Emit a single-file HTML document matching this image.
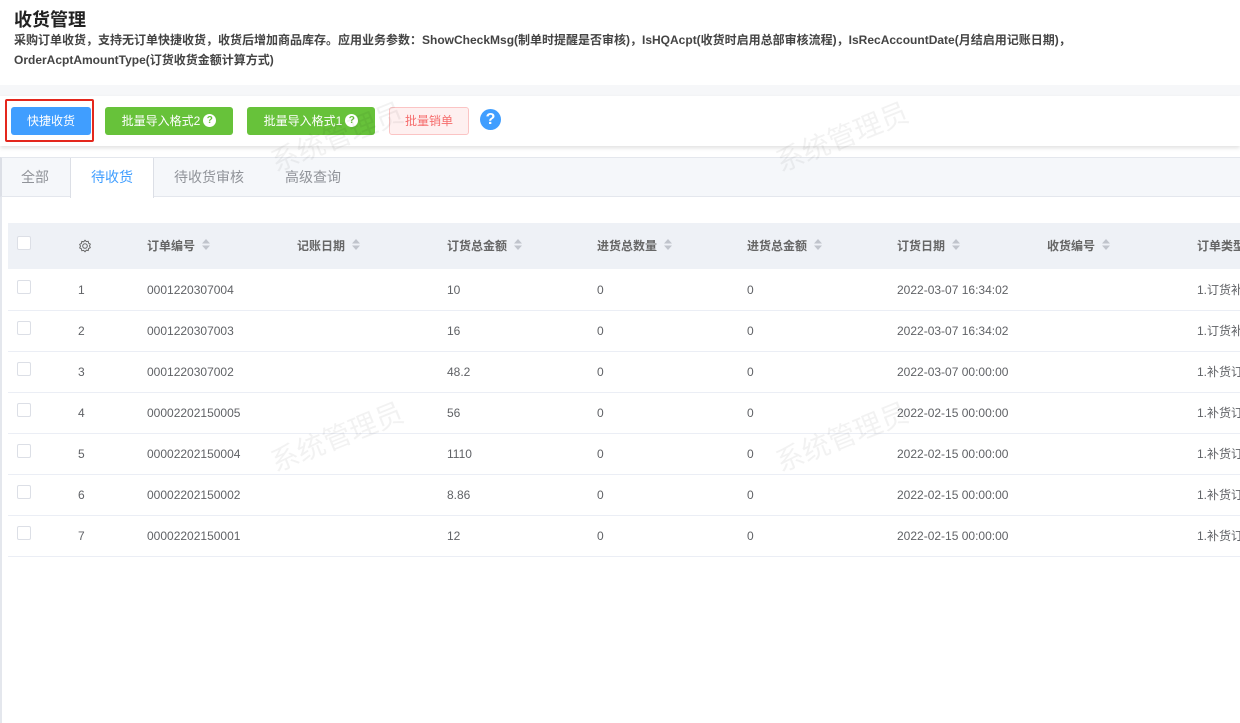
<!DOCTYPE html>
<html><head><meta charset="utf-8"><style>
*{margin:0;padding:0;box-sizing:border-box}
html{width:1240px;height:723px;overflow:hidden}
body{width:1240px;height:723px;overflow:hidden;background:#fff;font-family:"Liberation Sans","Noto Sans CJK SC",sans-serif;position:relative;color:#606266}
.title{position:absolute;left:14px;top:9px;font-size:18px;font-weight:bold;color:#222;line-height:22px}
.desc{position:absolute;left:14px;top:30px;font-size:12px;font-weight:bold;color:#444;line-height:20px;width:1220px}
.band{position:absolute;left:0;top:85px;width:1240px;height:11px;background:#f6f7f9}
.bar{position:absolute;left:0;top:96px;width:1240px;height:50px;background:#fff;box-shadow:0 2px 4px rgba(0,0,0,.12)}
.btn{position:absolute;top:107px;height:28px;border-radius:3px;font-size:12px;color:#fff;text-align:center;line-height:28px;white-space:nowrap}
.q{display:inline-block;width:13px;height:13px;border-radius:50%;background:#fff;color:#67c23a;font-size:10px;line-height:13px;font-weight:bold;vertical-align:middle;margin-left:3px;margin-top:-2px}
.tabs{position:absolute;left:0;top:157px;width:1240px;height:40px;background:#f5f7fa;border-top:1px solid #e4e7ed;border-bottom:1px solid #e4e7ed;border-left:2px solid #dcdfe6}
.tab{position:absolute;top:0;height:39px;line-height:39px;font-size:14px;color:#909399}
.lside{position:absolute;left:0;top:197px;width:2px;height:526px;background:#e4e7ed}
.thead{position:absolute;left:8px;top:223px;width:1232px;height:46px;background:#eef1f6}
.cell{position:absolute;font-size:12px;white-space:nowrap;line-height:16px}
.h{font-weight:bold;color:#666}
.sort{display:inline-block;margin-left:6px;vertical-align:-1px}
.cb{position:absolute;left:17px;width:14px;height:14px;border:1px solid #dcdfe6;border-radius:2px;background:#fff}
.row{position:absolute;left:8px;width:1232px;height:1px;background:#ebeef5}
.wm{position:absolute;font-size:28px;color:rgba(0,0,0,.05);transform:rotate(-22deg);transform-origin:left bottom;white-space:nowrap;line-height:30px}
</style></head><body>
<div class="title">收货管理</div>
<div class="desc">采购订单收货，支持无订单快捷收货，收货后增加商品库存。应用业务参数：ShowCheckMsg(制单时提醒是否审核)，IsHQAcpt(收货时启用总部审核流程)，IsRecAccountDate(月结启用记账日期)，<br>OrderAcptAmountType(订货收货金额计算方式)</div>
<div class="band"></div>
<div class="bar"></div>
<div style="position:absolute;left:5px;top:99px;width:89px;height:43px;border:2px solid #e4271d;border-radius:2px"></div>
<div class="btn" style="left:11px;width:80px;background:#409eff">快捷收货</div>
<div class="btn" style="left:105px;width:128px;background:#67c23a">批量导入格式2<span class="q">?</span></div>
<div class="btn" style="left:247px;width:128px;background:#67c23a">批量导入格式1<span class="q">?</span></div>
<div class="btn" style="left:389px;width:80px;background:#fef0f0;border:1px solid #fbc4c4;color:#f56c6c;line-height:26px">批量销单</div>
<div style="position:absolute;left:480px;top:109px;width:21px;height:21px;border-radius:50%;background:#409eff;color:#fff;font-weight:bold;font-size:16px;text-align:center;line-height:21px">?</div>
<div class="tabs">
<div class="tab" style="left:19px">全部</div>
<div class="tab" style="left:68px;width:84px;background:#fff;border-left:1px solid #dcdfe6;border-right:1px solid #dcdfe6;height:40px;color:#409eff;text-align:center">待收货</div>
<div class="tab" style="left:172px">待收货审核</div>
<div class="tab" style="left:283px">高级查询</div>
</div>
<div class="lside"></div>
<div class="thead"></div>
<div class="cb" style="top:236px"></div>
<svg style="position:absolute;left:78px;top:239px" width="14" height="14" viewBox="0 0 14 14"><circle cx="7" cy="7" r="2.3" fill="none" stroke="#666" stroke-width="1"/><path d="M7 1.2l1.3 1.4 1.9-.3.4 1.9 1.7.9-.8 1.8.8 1.8-1.7.9-.4 1.9-1.9-.3L7 12.8l-1.3-1.4-1.9.3-.4-1.9-1.7-.9.8-1.8-.8-1.8 1.7-.9.4-1.9 1.9.3z" fill="none" stroke="#666" stroke-width="1"/></svg>
<div id="hd"></div>
<div id="rows"></div>
<script>
var s='<svg class="sort" width="10" height="13" viewBox="0 0 10 13"><path d="M5 1L9 5.5H1z M5 12L9 7.5H1z" fill="#c0c4cc"/></svg>';
var hs=[["订单编号",147],["记账日期",297],["订货总金额",447],["进货总数量",597],["进货总金额",747],["订货日期",897],["收货编号",1047]];
var x="";hs.forEach(function(a){x+='<div class="cell h" style="left:'+a[1]+'px;top:238px">'+a[0]+s+'</div>';});
x+='<div class="cell h" style="left:1197px;top:238px">订单类型</div>';
document.getElementById("hd").innerHTML=x;
var d=[["0001220307004","10","2022-03-07 16:34:02","1.订货补"],["0001220307003","16","2022-03-07 16:34:02","1.订货补"],["0001220307002","48.2","2022-03-07 00:00:00","1.补货订"],["00002202150005","56","2022-02-15 00:00:00","1.补货订"],["00002202150004","1110","2022-02-15 00:00:00","1.补货订"],["00002202150002","8.86","2022-02-15 00:00:00","1.补货订"],["00002202150001","12","2022-02-15 00:00:00","1.补货订"]];
var h="";d.forEach(function(r,i){var t=269+i*41,y=t+13;
h+='<div class="cb" style="top:'+(t+11)+'px"></div><div class="cell" style="left:78px;top:'+y+'px">'+(i+1)+'</div><div class="cell" style="left:147px;top:'+y+'px">'+r[0]+'</div><div class="cell" style="left:447px;top:'+y+'px">'+r[1]+'</div><div class="cell" style="left:597px;top:'+y+'px">0</div><div class="cell" style="left:747px;top:'+y+'px">0</div><div class="cell" style="left:897px;top:'+y+'px">'+r[2]+'</div><div class="cell" style="left:1197px;top:'+y+'px">'+r[3]+'</div><div class="row" style="top:'+(t+41)+'px"></div>';});
document.getElementById("rows").innerHTML=h;
</script>
<div class="wm" style="left:278px;top:148px">系统管理员</div>
<div class="wm" style="left:783px;top:148px">系统管理员</div>
<div class="wm" style="left:278px;top:448px">系统管理员</div>
<div class="wm" style="left:783px;top:448px">系统管理员</div>
</body></html>
